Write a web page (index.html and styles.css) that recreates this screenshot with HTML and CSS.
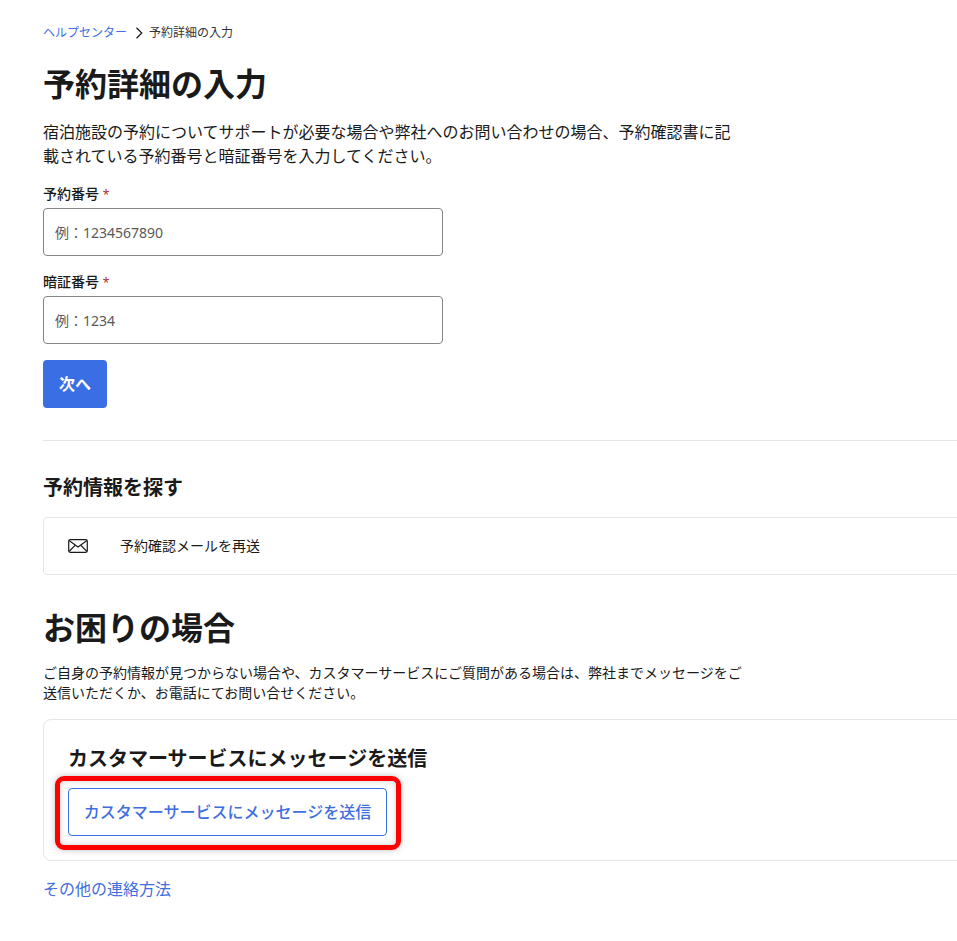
FILE: index.html
```html
<!DOCTYPE html>
<html lang="ja">
<head>
  <meta charset="UTF-8">
  <meta name="viewport" content="width=device-width, initial-scale=1.0">
  <title>予約詳細の入力</title>
  <link rel="stylesheet" href="styles.css">
</head>
<body>
  <div class="page">
    <nav class="breadcrumb">
      <a href="#">ヘルプセンター</a>
      <svg class="chevron" width="8" height="12" viewBox="0 0 8 12"><path d="M1.500 0.800 6.800 6l-5.300 5.200" fill="none" stroke="#1a1a1a" stroke-width="1.200"/></svg>
      <span>予約詳細の入力</span>
    </nav>

    <h1>予約詳細の入力</h1>
    <p class="intro">宿泊施設の予約についてサポートが必要な場合や弊社へのお問い合わせの場合、予約確認書に記載されている予約番号と暗証番号を入力してください。</p>

    <form class="lookup">
      <label class="field">
        <span class="field-label">予約番号 <em>*</em></span>
        <input type="text" placeholder="例：1234567890">
      </label>
      <label class="field">
        <span class="field-label">暗証番号 <em>*</em></span>
        <input type="text" placeholder="例：1234">
      </label>
      <button type="button" class="next">次へ</button>
    </form>

    <hr>

    <h2>予約情報を探す</h2>
    <a class="resend" href="#">
      <svg width="20" height="14" viewBox="0 0 20 14"><rect x="0.700" y="0.700" width="18.600" height="12.600" rx="1.500" fill="none" stroke="#1a1a1a" stroke-width="1.200"/><path d="M1 1.500 10 8l9-6.500M1 12.500 7 6.500M19 12.500l-6-6" fill="none" stroke="#1a1a1a" stroke-width="1.100"/></svg>
      <span class="resend-text">予約確認メールを再送</span>
    </a>

    <h1 class="help-title">お困りの場合</h1>
    <p class="help-text">ご自身の予約情報が見つからない場合や、カスタマーサービスにご質問がある場合は、弊社までメッセージをご送信いただくか、お電話にてお問い合せください。</p>

    <section class="contact-card">
      <h3>カスタマーサービスにメッセージを送信</h3>
      <div class="contact-action">
        <button type="button" class="outline">カスタマーサービスにメッセージを送信</button>
        <div class="highlight"></div>
      </div>
    </section>

    <a class="other-link" href="#">その他の連絡方法</a>
  </div>
</body>
</html>
```

FILE: styles.css
```css
html, body {
  margin: 0;
  padding: 0;
  background: #fff;
}
body {
  font-family: "Noto Sans", "Noto Sans CJK JP", sans-serif;
  color: #1a1a1a;
  height: 941px;
  overflow: hidden;
}
a {
  color: #3f6ee0;
  text-decoration: none;
}
.page {
  padding: 25px 0 0 43px;
  margin-right: -60px;
}
.breadcrumb {
  display: flex;
  align-items: center;
  gap: 7px;
  height: 16px;
  font-size: 12px;
  line-height: 16px;
  color: #333;
}
.chevron {
  margin: 0 -1px 0 1px;
}
h1 {
  margin: 19px 0 0;
  font-size: 32px;
  line-height: 48px;
  font-weight: 700;
}
.intro {
  width: 700px;
  margin: 12px 0 0;
  font-size: 16px;
  line-height: 24px;
}
.lookup {
  margin-top: 16px;
}
.field {
  display: block;
  margin-bottom: 16px;
}
.field-label {
  display: block;
  height: 24px;
  font-size: 14px;
  line-height: 20px;
  font-weight: 500;
}
.field-label em {
  color: #b3262b;
  font-size: 12px;
  font-style: normal;
  font-weight: 400;
}
input {
  display: block;
  box-sizing: border-box;
  width: 400px;
  height: 48px;
  padding: 0 11px;
  border: 1px solid #868686;
  border-radius: 4px;
  font-family: inherit;
  font-size: 14px;
}
input::placeholder {
  color: #595959;
  opacity: 1;
}
.next {
  display: block;
  width: 64px;
  height: 48px;
  padding: 0 0 2px;
  border: none;
  border-radius: 4px;
  background: #3a6ee4;
  color: #fff;
  font-family: inherit;
  font-size: 16px;
  font-weight: 700;
}
hr {
  height: 1px;
  margin: 32px 0 0;
  border: none;
  background: #e6e6e6;
}
h2 {
  margin: 32px 0 0;
  font-size: 20px;
  line-height: 30px;
  font-weight: 700;
}
.resend {
  display: flex;
  align-items: center;
  gap: 32px;
  box-sizing: border-box;
  height: 58px;
  margin-top: 14px;
  padding-left: 24px;
  border: 1px solid #e6e6e6;
  border-radius: 4px;
  color: #1a1a1a;
  font-size: 14px;
}
.resend-text {
  padding-bottom: 2px;
}
.help-title {
  margin-top: 29px;
}
.help-text {
  width: 700px;
  margin: 11px 0 0;
  font-size: 14px;
  line-height: 20px;
}
.contact-card {
  box-sizing: border-box;
  height: 142px;
  margin-top: 16px;
  padding: 24px;
  border: 1px solid #e6e6e6;
  border-radius: 8px;
}
.contact-card h3 {
  margin: 0;
  font-size: 20px;
  line-height: 30px;
  font-weight: 700;
}
.contact-action {
  position: relative;
  width: 319px;
  margin-top: 14px;
}
.outline {
  display: block;
  width: 319px;
  height: 48px;
  padding: 0 0 2px;
  border: 1px solid #3a6ee4;
  border-radius: 4px;
  background: #fff;
  color: #3f6ee0;
  font-family: inherit;
  font-size: 16px;
  font-weight: 500;
  white-space: nowrap;
}
.highlight {
  position: absolute;
  top: -12px;
  left: -13px;
  right: -14px;
  bottom: -14px;
  border: 5px solid #f00;
  border-radius: 9px;
  box-shadow: 0 0 6px rgba(0, 0, 0, 0.25), inset 0 0 6px rgba(0, 0, 0, 0.2);
  pointer-events: none;
}
.other-link {
  display: block;
  margin-top: 16px;
  font-size: 16px;
  line-height: 24px;
}
```
